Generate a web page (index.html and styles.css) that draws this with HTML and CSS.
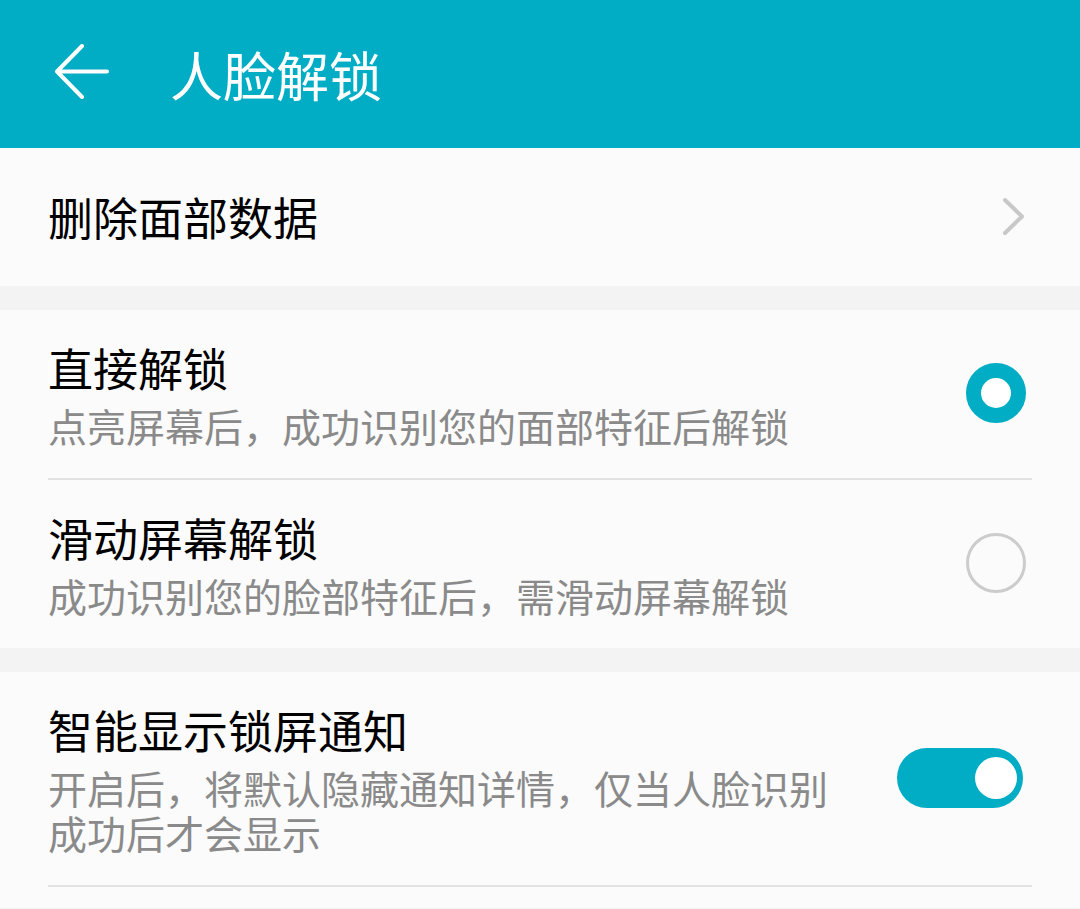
FILE: index.html
```html
<!DOCTYPE html>
<html lang="zh-CN">
<head>
  <meta charset="UTF-8">
  <meta name="viewport" content="width=device-width, initial-scale=1.0">
  <title>人脸解锁</title>
  <link rel="stylesheet" href="styles.css">
</head>
<body>
  <div class="top-bar">
    <button class="back" aria-label="返回">
      <svg width="56" height="56" viewBox="0 0 56 56">
        <path d="M3 27.5 H53 M28 2 L3 27.5 L28 53" fill="none" stroke="#fff" stroke-width="4" stroke-linecap="round" stroke-linejoin="round"/>
      </svg>
    </button>
    <h1>人脸解锁</h1>
  </div>

  <div class="group">
    <div class="row single">
      <div class="text">
        <div class="title">删除面部数据</div>
      </div>
      <svg class="chevron" width="24" height="40" viewBox="0 0 24 40">
        <path d="M3 3 L20 19.5 L3 36" fill="none" stroke="#c8c8c8" stroke-width="4" stroke-linecap="round" stroke-linejoin="round"/>
      </svg>
    </div>
  </div>

  <div class="group">
    <div class="row">
      <div class="text">
        <div class="title">直接解锁</div>
        <div class="sub">点亮屏幕后，成功识别您的面部特征后解锁</div>
      </div>
      <span class="radio checked"></span>
    </div>
    <div class="row">
      <div class="text">
        <div class="title">滑动屏幕解锁</div>
        <div class="sub">成功识别您的脸部特征后，需滑动屏幕解锁</div>
      </div>
      <span class="radio"></span>
    </div>
  </div>

  <div class="group last">
    <div class="row">
      <div class="text">
        <div class="title">智能显示锁屏通知</div>
        <div class="sub">开启后，将默认隐藏通知详情，仅当人脸识别成功后才会显示</div>
      </div>
      <span class="switch on"><span class="knob"></span></span>
    </div>
  </div>
</body>
</html>
```

FILE: styles.css
```css
body {
  margin: 0;
  background-color: #f3f3f3;
  font-family: "Noto Sans CJK SC", "Noto Sans", sans-serif;
  color: #000;
  overflow: hidden;
}
.top-bar {
  height: 148px;
  background-color: #00adc4;
  display: flex;
  align-items: center;
  padding-left: 54px;
  box-sizing: border-box;
}
.top-bar .back {
  width: 56px;
  height: 56px;
  padding: 0;
  border: none;
  background: none;
  margin-top: -4px;
  cursor: pointer;
}
.top-bar .back svg {
  display: block;
}
.top-bar h1 {
  margin: 0 0 0 60px;
  font-size: 53px;
  font-weight: normal;
  color: #fff;
  line-height: 60px;
}
.group {
  background-color: #fbfbfb;
  padding: 0 48px;
  margin-bottom: 24px;
}
.group.last {
  margin-bottom: 0;
  padding-bottom: 21px;
}
.row {
  display: flex;
  align-items: center;
  gap: 40px;
  padding: 28px 0 30px;
  border-bottom: 2px solid #e2e2e2;
}
.group .row:last-child {
  border-bottom: none;
}
.group.last .row:last-child {
  border-bottom: 2px solid #e2e2e2;
}
.row.single {
  height: 138px;
  padding: 0;
  box-sizing: border-box;
}
.text {
  flex: 1;
}
.title {
  font-size: 45px;
  line-height: 60px;
}
.sub {
  margin-top: 5px;
  font-size: 39px;
  line-height: 45px;
  color: #8a8a8a;
}
.chevron {
  display: block;
  margin-right: 6px;
}
.radio {
  width: 60px;
  height: 60px;
  box-sizing: border-box;
  border-radius: 50%;
  border: 3px solid #cccccc;
  margin-right: 6px;
  flex-shrink: 0;
}
.radio.checked {
  border: 15px solid #00adc4;
  background-color: #fff;
}
.switch {
  position: relative;
  width: 126px;
  height: 60px;
  border-radius: 30px;
  background-color: #cccccc;
  margin-right: 9px;
  flex-shrink: 0;
}
.switch.on {
  background-color: #00adc4;
}
.switch .knob {
  position: absolute;
  top: 9px;
  left: 9px;
  width: 42px;
  height: 42px;
  border-radius: 50%;
  background-color: #fff;
}
.switch.on .knob {
  left: auto;
  right: 6px;
}
```
